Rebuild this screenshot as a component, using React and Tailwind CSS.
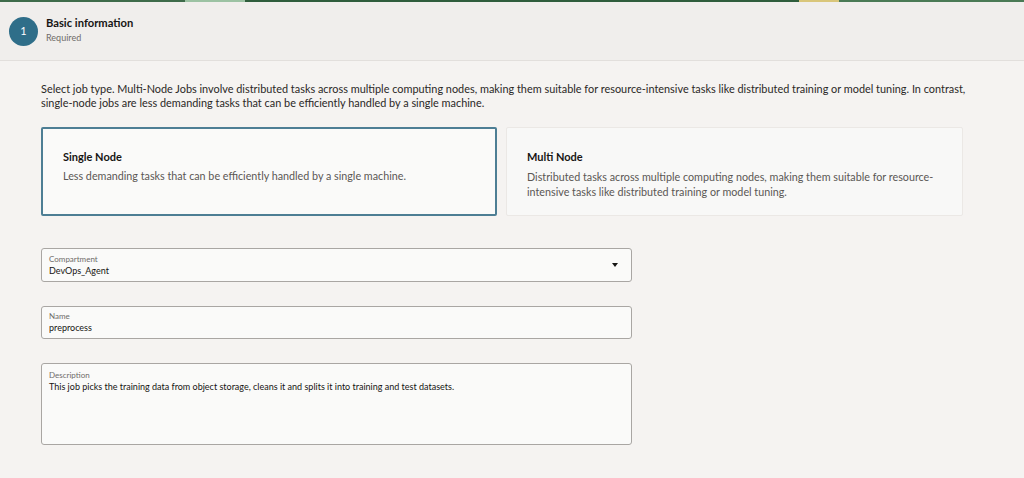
export default function App() {
  return (
    <div className="w-[1024px] h-[478px] overflow-hidden bg-[#f5f3f1] text-[#161513]" style={{ fontFamily: 'Lato, "Open Sans", sans-serif' }}>
      <div className="h-[2px] flex">
        <div className="flex-1 bg-[#3e6b4a]" />
        <div className="w-[60px] bg-[#9cc2a3]" />
        <div className="flex-[3] bg-[#2f5d3c]" />
        <div className="w-[40px] bg-[#d9c67a]" />
        <div className="flex-1 bg-[#4a7a55]" />
      </div>
      <div className="h-[59px] bg-[#f0eeec] border-b border-[#e2dfdc] flex items-center pl-[9px] gap-[8px]">
        <div className="w-[29px] h-[29px] rounded-full bg-[#2f6e89] text-white text-[11px] flex items-center justify-center">1</div>
        <div className="flex flex-col -mt-[2px]">
          <span className="text-[11.2px] font-bold leading-[16px]">Basic information</span>
          <span className="text-[9px] text-[#6f6c69] leading-[14px]">Required</span>
        </div>
      </div>
      <div className="pl-[41px] pt-[21px]">
        <p className="w-[925px] text-[10.9px] leading-[14px] text-[#2a2826]">
          Select job type. Multi-Node Jobs involve distributed tasks across multiple computing nodes, making them suitable for resource-intensive tasks like distributed training or model tuning. In contrast, single-node jobs are less demanding tasks that can be efficiently handled by a single machine.
        </p>
        <div className="flex gap-[9px] mt-[17px]">
          <div className="w-[456px] h-[89px] bg-[#fafaf9] border-2 border-[#4d7e94] rounded-[2px] pl-[20px] pt-[20px]">
            <div className="text-[11px] font-bold">Single Node</div>
            <div className="text-[10.75px] text-[#5a5754] mt-[3px] leading-[14px]">Less demanding tasks that can be efficiently handled by a single machine.</div>
          </div>
          <div className="w-[457px] h-[89px] bg-[#f8f8f7] border border-[#ebe8e5] rounded-[2px] pl-[20px] pt-[21px] pr-[20px]">
            <div className="text-[11px] font-bold">Multi Node</div>
            <div className="text-[10.75px] text-[#5a5754] mt-[3px] leading-[15px]">Distributed tasks across multiple computing nodes, making them suitable for resource-intensive tasks like distributed training or model tuning.</div>
          </div>
        </div>
        <div className="w-[591px] mt-[32px] flex flex-col gap-[24px]">
          <div className="h-[34px] bg-[#fafaf9] border border-[#a9a6a3] rounded-[3px] pl-[7px] pr-[13px] flex items-center justify-between">
            <div className="flex flex-col">
              <span className="text-[8px] text-[#6f6c69] leading-[10px]">Compartment</span>
              <span className="text-[9px] leading-[13px]">DevOps_Agent</span>
            </div>
            <svg width="6" height="4" viewBox="0 0 6 4"><path d="M0 0h6L3 4z" fill="#161513" /></svg>
          </div>
          <div className="h-[33px] bg-[#fafaf9] border border-[#a9a6a3] rounded-[3px] px-[7px] flex flex-col justify-center">
            <span className="text-[8px] text-[#6f6c69] leading-[10px]">Name</span>
            <span className="text-[9px] leading-[13px]">preprocess</span>
          </div>
          <div className="h-[82px] bg-[#fafaf9] border border-[#a9a6a3] rounded-[3px] px-[7px] pt-[6px] flex flex-col">
            <span className="text-[8px] text-[#6f6c69] leading-[10px]">Description</span>
            <span className="text-[9px] leading-[13px]">This job picks the training data from object storage, cleans it and splits it into training and test datasets.</span>
          </div>
        </div>
      </div>
    </div>
  );
}
